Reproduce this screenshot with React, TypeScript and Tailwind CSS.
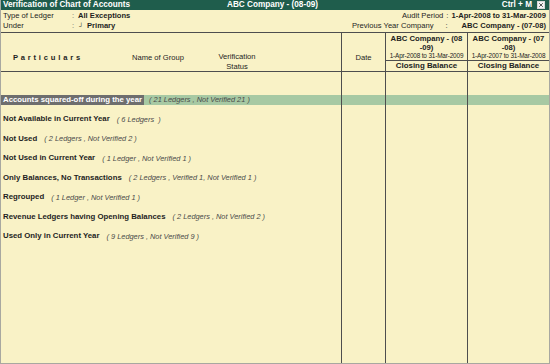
const rows = [
  { name: "Accounts squared-off during the year", info: "( 21 Ledgers , Not Verified 21 )", active: true },
  { name: "Not Available in Current Year", info: "( 6 Ledgers  )", active: false },
  { name: "Not Used", info: "( 2 Ledgers , Not Verified 2 )", active: false },
  { name: "Not Used in Current Year", info: "( 1 Ledger , Not Verified 1 )", active: false },
  { name: "Only Balances, No Transactions", info: "( 2 Ledgers , Verified 1, Not Verified 1 )", active: false },
  { name: "Regrouped", info: "( 1 Ledger , Not Verified 1 )", active: false },
  { name: "Revenue Ledgers having Opening Balances", info: "( 2 Ledgers , Not Verified 2 )", active: false },
  { name: "Used Only in Current Year", info: "( 9 Ledgers , Not Verified 9 )", active: false },
];

const cols = "grid grid-cols-[340px_44px_82px_82px]";
const vline = "border-l border-[#4e4e4e]";

const CompanyHead = ({ top, bottom, range }: { top: string; bottom: string; range: string }) => (
  <div className={`${vline} flex flex-col text-center`}>
    <div className="pt-[1px] text-[7.7px] font-bold leading-[9px] text-[#222]">{top}</div>
    <div className="text-[7.7px] font-bold leading-[9px] text-[#222]">{bottom}</div>
    <div className="h-[8px] whitespace-nowrap text-[6.4px] leading-[8px] tracking-[-0.15px] text-[#222]">{range}</div>
    <div className="flex h-[11px] items-center justify-center border-t border-[#4e4e4e] text-[7.9px] font-bold text-[#222]">
      Closing Balance
    </div>
  </div>
);

export default function App() {
  return (
    <div
      className="flex h-[364px] w-[550px] flex-col overflow-hidden border-x border-b border-[#a8a8a0] bg-[#f9f2c6] text-[#1e1e1e]"
      style={{ fontFamily: '"Liberation Sans", Arial, sans-serif' }}
    >
      {/* title bar */}
      <div className="flex h-[10px] items-center bg-[#1f5d4c] pl-[2px] pr-[4px] text-[8.2px] font-bold leading-none text-white">
        <span className="w-[224px]">Verification of Chart of Accounts</span>
        <span className="flex-1">ABC Company - (08-09)</span>
        <span className="mr-[5px]">Ctrl + M</span>
        <svg width="8" height="8" viewBox="0 0 8 8">
          <rect x="0.5" y="0.5" width="7" height="7" fill="#f4f4f4" stroke="#d8d8d8" />
          <path d="M2.2 2.2 L5.8 5.8 M5.8 2.2 L2.2 5.8" stroke="#555" strokeWidth="1" />
        </svg>
      </div>

      {/* ledger info */}
      <div className="flex h-[23px] border-b border-[#4e4e4e] pt-[1px] text-[7.6px] leading-[10px]">
        <div className="flex flex-col pl-[2px]">
          <div className="flex">
            <span className="w-[69px]">Type of Ledger</span>
            <span className="w-[6px] text-[#666]">:</span>
            <span className="font-bold">All Exceptions</span>
          </div>
          <div className="flex">
            <span className="w-[69px]">Under</span>
            <span className="w-[6px] text-[#666]">:</span>
            <span className="w-[9px] pl-[1px] text-[6px] font-bold">┘</span>
            <span className="font-bold">Primary</span>
          </div>
        </div>
        <div className="ml-auto flex flex-col items-end pr-[3px]">
          <div className="flex">
            <span>Audit Period</span>
            <span className="mx-[3px]">:</span>
            <span className="font-bold">1-Apr-2008 to 31-Mar-2009</span>
          </div>
          <div className="flex">
            <span>Previous Year Company</span>
            <span className="ml-[12px] mr-[14px]">:</span>
            <span className="font-bold">ABC Company - (07-08)</span>
          </div>
        </div>
      </div>

      {/* column header */}
      <div className={`${cols} h-[39px] border-b border-[#4e4e4e]`}>
        <div className="flex items-end text-[7.6px] leading-[10px]">
          <span className="mb-[8px] w-[131px] pl-[12px] font-bold tracking-[0.35px]">P a r t i c u l a r s</span>
          <span className="mb-[8px] w-[80px]">Name of Group</span>
          <span className="mb-[-1px] w-[50px] text-center">
            Verification
            <br />
            Status
          </span>
        </div>
        <div className={`${vline} flex items-end justify-center pb-[8px] text-[7.6px] leading-[10px]`}>Date</div>
        <CompanyHead top="ABC Company - (08" bottom="-09)" range="1-Apr-2008 to 31-Mar-2009" />
        <CompanyHead top="ABC Company - (07" bottom="-08)" range="1-Apr-2007 to 31-Mar-2008" />
      </div>

      {/* body */}
      <div className={`${cols} flex-1 grid-rows-[18px_repeat(8,19.5px)_1fr]`}>
        <div />
        <div className={vline} />
        <div className={vline} />
        <div className={vline} />
        {rows.map((row) => (
          <div key={row.name} className="contents">
            <div className="flex items-center">
              <div className={`flex h-[10px] w-full items-center ${row.active ? "bg-[#a7c9a3]" : ""}`}>
                <span
                  className={`px-[2px] text-[7.8px] font-bold leading-[10px] ${
                    row.active ? "bg-[#6e6e6e] text-white" : "text-[#1e1e1e]"
                  }`}
                >
                  {row.name}
                </span>
                <span className="ml-[5px] whitespace-pre text-[7.4px] italic text-[#4a4a4a]">{row.info}</span>
              </div>
            </div>
            {[0, 1, 2].map((i) => (
              <div key={i} className={`${vline} flex items-center`}>
                {row.active && <div className="h-[10px] w-full bg-[#a7c9a3]" />}
              </div>
            ))}
          </div>
        ))}
        <div />
        <div className={vline} />
        <div className={vline} />
        <div className={vline} />
      </div>
    </div>
  );
}
